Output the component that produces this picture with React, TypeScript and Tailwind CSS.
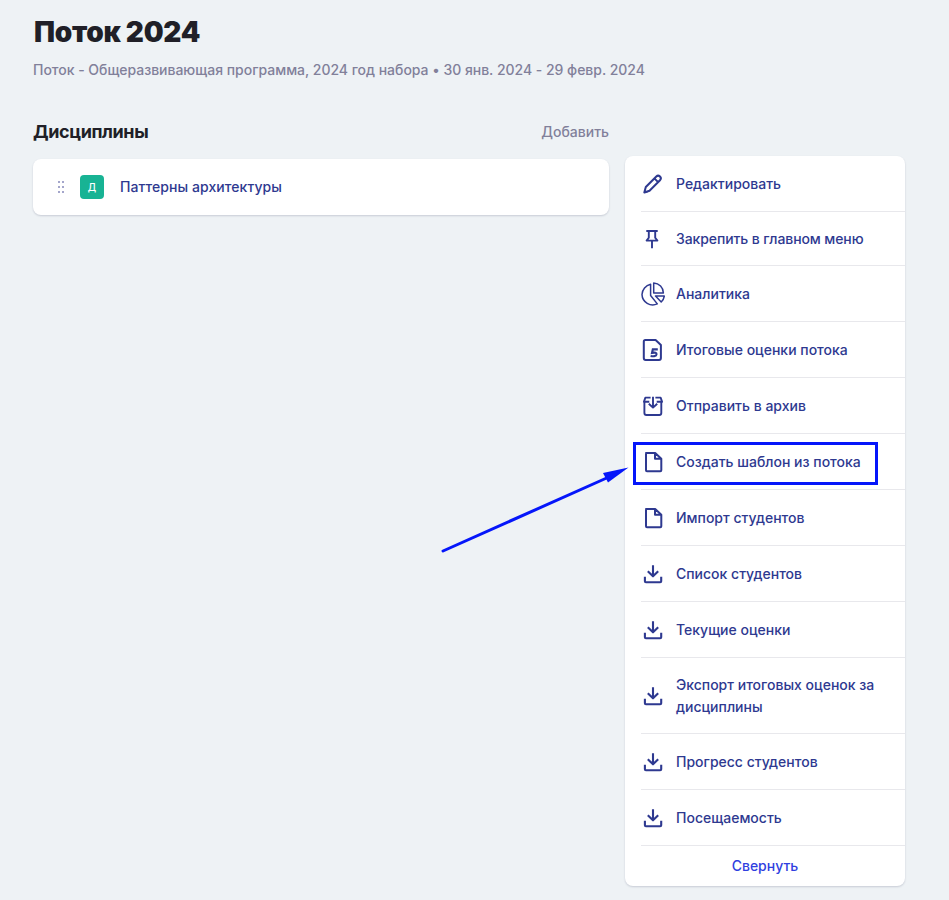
import type { ReactNode } from "react";

function Icon({ children, width = 2 }: { children: ReactNode; width?: number }) {
  return (
    <svg className="size-6 shrink-0" viewBox="0 0 24 24" fill="none" stroke="currentColor" strokeWidth={width} strokeLinejoin="round">
      {children}
    </svg>
  );
}

const pencil = (
  <Icon>
    <path d="M3.3 20.5 4.8 15 15.3 4.5q1.8-1.8 3.7 0 1.8 1.9 0 3.7L8.5 18.7ZM13.4 6.4l3.7 3.7M3.3 20.5l3.6-1" />
  </Icon>
);
const pin = (
  <Icon width={1.9}>
    <path d="M5.3 4h11.4M7.8 4v6.7l-2.2 2.9h10.8l-2.2-2.9V4M11 13.6v7.6" />
  </Icon>
);
const pie = (
  <Icon width={1.5}>
    <path d="M9.6 2.2A11 11 0 0 0 1 12.6a10.8 10.8 0 0 0 15.3 9.3L9.6 13.5ZM12.7 1v10h9.7A10 10 0 0 0 12.7 1ZM14.5 14h8.8q-.5 3.5-3.1 6Z" />
  </Icon>
);
const grade = (
  <Icon>
    <path d="M4.3 2h10.3l5.3 5v13.1q0 1.9-1.9 1.9H4.7Q2.8 22 2.8 20.1V3.5Q2.8 2 4.3 2Z" />
    <path d="M16.8 11.4h-5l-.8 3.5q4.8-.9 4.5 1.3-.5 2.9-5.9 1.7" strokeWidth="2.1" strokeLinejoin="miter" />
  </Icon>
);
const archive = (
  <Icon width={1.9}>
    <path d="M9.6 3.6H4.4L2.9 7.8h5.4M14.4 3.6h5.2l1.5 4.2h-5.4M3.4 7.8V19q0 2 2 2h12.9q2 0 2-2V7.8M12 2.8v10.4M7.8 9.7l4.2 3.9 4.2-3.9" />
  </Icon>
);
const file = (
  <Icon>
    <path d="M5 3h9.2l6.1 5.8v11.5q0 1-1 1H6q-1 0-1-1V4q0-1 1-1ZM14 3v5.8h6" />
  </Icon>
);
const download = (
  <Icon width={2.1}>
    <path d="M3.9 14.7v4.6q0 1 1 1h14.3q1 0 1-1v-4.6M12 3.2v11M6.8 9.2l5.2 5.1 5.2-5.1" />
  </Icon>
);

const items = [
  { icon: pencil, label: "Редактировать", height: "h-14" },
  { icon: pin, label: "Закрепить в главном меню", height: "h-[54px] tracking-[-0.1px]" },
  { icon: pie, label: "Аналитика", height: "h-14" },
  { icon: grade, label: "Итоговые оценки потока", height: "h-14" },
  { icon: archive, label: "Отправить в архив", height: "h-14" },
  { icon: file, label: "Создать шаблон из потока", height: "h-14", marked: true },
  { icon: file, label: "Импорт студентов", height: "h-14" },
  { icon: download, label: "Список студентов", height: "h-14" },
  { icon: download, label: "Текущие оценки", height: "h-14" },
  { icon: download, label: "Экспорт итоговых оценок за дисциплины", height: "h-[76px]" },
  { icon: download, label: "Прогресс студентов", height: "h-14" },
  { icon: download, label: "Посещаемость", height: "h-14" },
];

function Callout() {
  return (
    <>
      <div className="absolute -left-2 top-2 h-[43px] w-[245px] border-3 border-[#0516fa]" />
      <svg className="absolute -left-[201px] top-[31px] h-[90px] w-[192px]" viewBox="0 0 192 90">
        <path d="M3 86 170 11.5" stroke="#0516fa" strokeWidth="3" strokeLinecap="round" />
        <path d="M188.5 2.5 163 8l5 9.5Z" fill="#0516fa" />
      </svg>
    </>
  );
}

export default function App() {
  return (
    <div className="h-[900px] w-[949px] overflow-hidden bg-[#eef2f5] pl-[33px] pt-3 font-['Inter',sans-serif] text-sm font-medium tracking-normal text-[#2e3990]">
      <header>
        <h1 className="pl-px text-[28px] leading-10 font-black tracking-[-0.25px] text-[#201f27]">Поток 2024</h1>
        <p className="mt-2 leading-5 tracking-[-0.02px] text-[#81809a]">Поток - Общеразвивающая программа, 2024 год набора • 30 янв. 2024 - 29 февр. 2024</p>
      </header>
      <div className="flex items-start gap-4">
        <main className="w-[576px] pt-10">
          <div className="flex h-6 items-center justify-between">
            <h2 className="text-lg font-bold tracking-[-0.4px] text-[#201f27]">Дисциплины</h2>
            <button className="text-[#81809a]">Добавить</button>
          </div>
          <div className="mt-[15px] flex h-14 items-center rounded-lg bg-white pl-[25px] shadow-[0_1px_2px_rgba(30,35,70,0.18)]">
            <svg className="h-3 w-[6px]" viewBox="0 0 6 12" fill="#a4a6cb">
              <path d="M0 0h2v2H0zM4 0h2v2H4zM0 5h2v2H0zM4 5h2v2H4zM0 10h2v2H0zM4 10h2v2H4z" />
            </svg>
            <span className="ml-4 flex size-6 items-center justify-center rounded bg-[#18b394] text-[10px] text-white">Д</span>
            <span className="ml-4 tracking-[0.06px]">Паттерны архитектуры</span>
          </div>
        </main>
        <aside className="mt-19 w-[280px] rounded-lg bg-white pl-4 shadow-[0_1px_2px_rgba(30,35,70,0.18)]">
          {items.map(({ icon, label, height, marked }) => (
            <div key={label} className={`relative flex items-center gap-[11px] border-b border-[#e8e8ec] pr-4 ${height}`}>
              {icon}
              <span className="leading-[22px]">{label}</span>
              {marked && <Callout />}
            </div>
          ))}
          <button className="flex h-10 w-full items-center justify-center pr-4 text-[#303fe0]">Свернуть</button>
        </aside>
      </div>
    </div>
  );
}
